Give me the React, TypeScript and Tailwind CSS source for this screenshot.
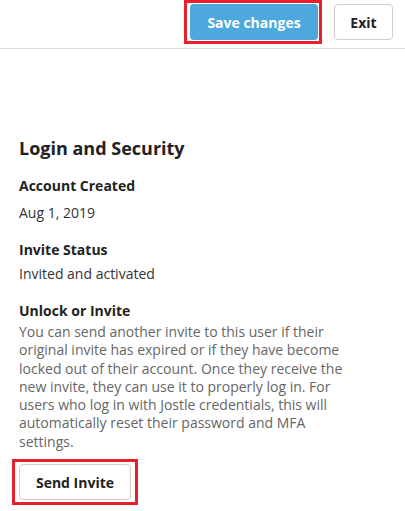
export default function App() {
  return (
    <div className="min-h-[511px] w-full bg-white text-[#222] [font-family:'Open_Sans',sans-serif]">
      {/* header */}
      <div className="flex h-[49px] items-start justify-end gap-3 border-b border-[#d9d9d9] pr-3">
        <div className="border-[3px] border-[#e8202a] py-px pl-[3px] pr-px">
          <button className="h-[36px] w-[128px] rounded-[4px] bg-[#4ca8dd] text-[14px] font-bold text-white">
            Save changes
          </button>
        </div>
        <button className="mt-1 h-[36px] w-[59px] rounded-[4px] border border-[#cfcfcf] bg-white text-[14px] font-bold text-[#222]">
          Exit
        </button>
      </div>

      <div className="px-[19px] pt-[85px]">
        <h1 className="text-[18px] font-bold leading-[28px]">Login and Security</h1>

        <h2 className="mt-[14px] text-[14px] font-bold leading-[20px]">Account Created</h2>
        <p className="mt-[7px] text-[14px] leading-[20px] text-[#333]">Aug 1, 2019</p>

        <h2 className="mt-[17px] text-[14px] font-bold leading-[20px]">Invite Status</h2>
        <p className="mt-[4px] text-[14px] leading-[20px] text-[#333]">Invited and activated</p>

        <h2 className="mt-[17px] text-[14px] font-bold leading-[20px]">Unlock or Invite</h2>
        <p className="mt-[2px] w-[340px] text-[14px] leading-[18.3px] text-[#666]">
          You can send another invite to this user if their original invite has expired or if they
          have become locked out of their account. Once they receive the new invite, they can use it
          to properly log in. For users who log in with Jostle credentials, this will automatically
          reset their password and MFA settings.
        </p>

        <div className="-ml-[7px] mt-[8px] inline-block border-[3px] border-[#e8202a] py-[2px] pl-[4px] pr-[4px]">
          <button className="h-[36px] w-[112px] rounded-[4px] border border-[#cfcfcf] bg-white text-[14px] font-bold text-[#222]">
            Send Invite
          </button>
        </div>
      </div>
    </div>
  );
}
